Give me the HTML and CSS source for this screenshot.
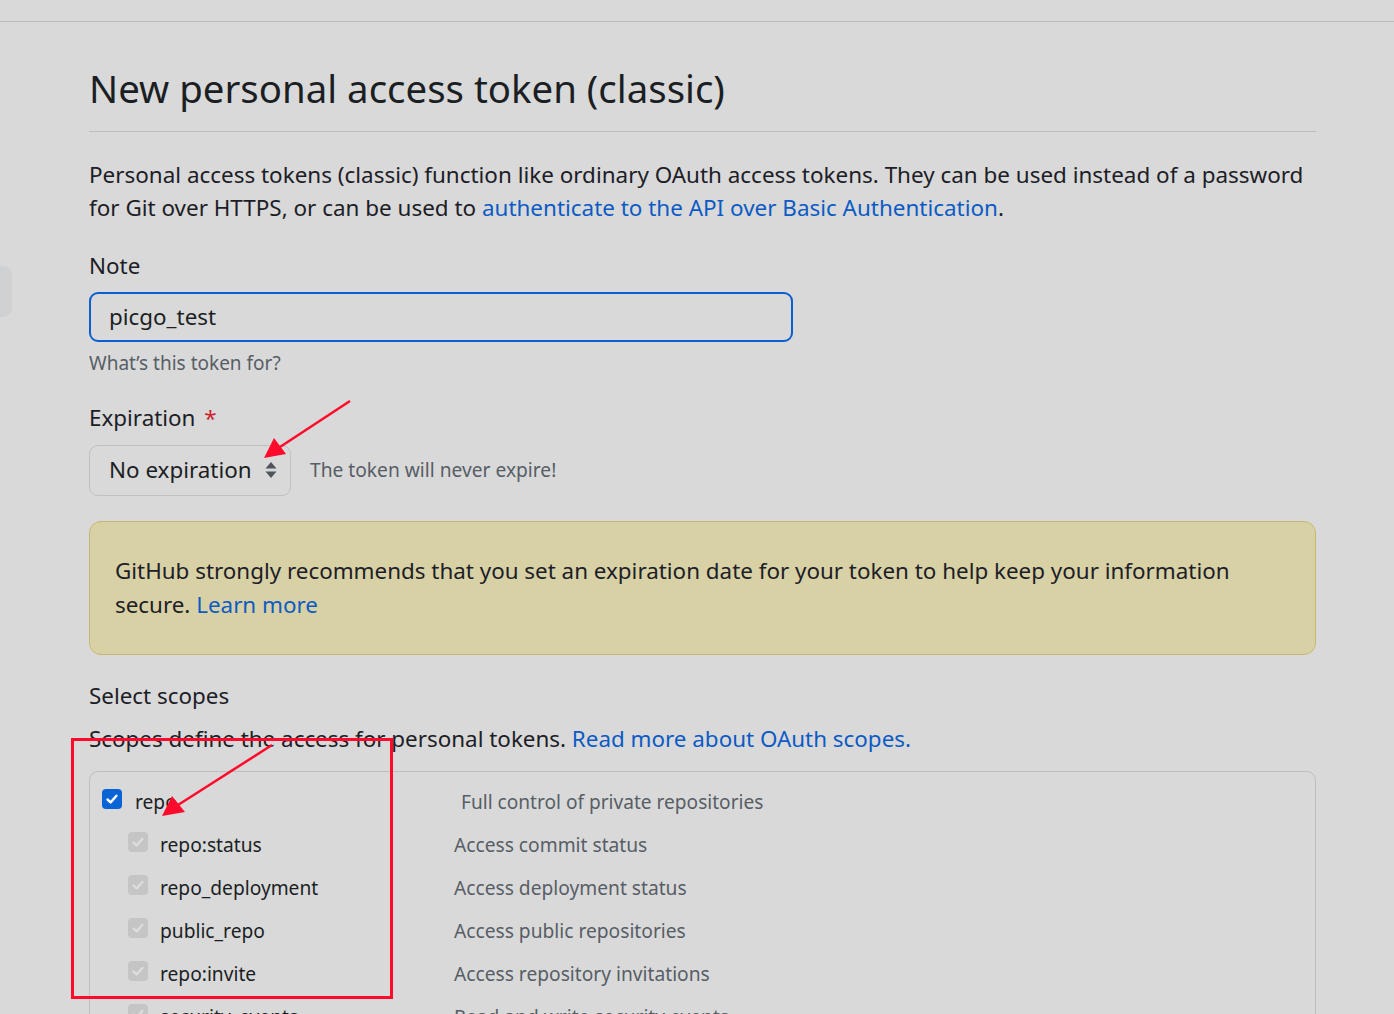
FILE: index.html
```html
<!DOCTYPE html>
<html lang="en">
<head>
<meta charset="utf-8">
<title>New personal access token (classic)</title>
<link rel="stylesheet" href="styles.css">
</head>
<body>
<div class="topbar"></div>
<div class="side-tab"></div>
<main class="page">
  <h2 class="title">New personal access token (classic)</h2>
  <p class="intro">Personal access tokens (classic) function like ordinary OAuth access tokens. They can be used instead of a password for Git over HTTPS, or can be used to <a href="#">authenticate to the API over Basic Authentication</a>.</p>

  <div class="field">
    <label class="label">Note</label>
    <input class="input" type="text" value="picgo_test">
    <div class="note">What’s this token for?</div>
  </div>

  <div class="field field-exp">
    <label class="label">Expiration <span class="req">*</span></label>
    <div class="exp-row">
      <div class="select">
        <span>No expiration</span>
        <svg class="sel-icon" width="12" height="18" viewBox="0 0 12 18"><path d="M6 1 L11.5 7.5 H0.5 Z" fill="#4f555c"/><path d="M6 17 L11.5 10.5 H0.5 Z" fill="#4f555c"/></svg>
      </div>
      <span class="exp-note">The token will never expire!</span>
    </div>
  </div>

  <div class="flash">GitHub strongly recommends that you set an expiration date for your token to help keep your information secure. <a href="#">Learn more</a></div>

  <div class="scopes-head">
    <div class="label">Select scopes</div>
    <p class="scopes-desc">Scopes define the access for personal tokens. <a href="#">Read more about OAuth scopes.</a></p>
  </div>

  <div class="scopes">
    <div class="row parent">
      <span class="name"><span class="cb on"><svg width="14" height="14" viewBox="0 0 14 14"><path d="M2.5 7.5 L5.6 10.4 L11.5 3.8" stroke="#fff" stroke-width="2.4" fill="none" stroke-linecap="round" stroke-linejoin="round"/></svg></span>repo</span>
      <span class="desc">Full control of private repositories</span>
    </div>
    <div class="row child">
      <span class="name"><span class="cb off"><svg width="14" height="14" viewBox="0 0 14 14"><path d="M2.5 7.5 L5.6 10.4 L11.5 3.8" stroke="#dedede" stroke-width="2.2" fill="none" stroke-linecap="round" stroke-linejoin="round"/></svg></span>repo:status</span>
      <span class="desc">Access commit status</span>
    </div>
    <div class="row child">
      <span class="name"><span class="cb off"><svg width="14" height="14" viewBox="0 0 14 14"><path d="M2.5 7.5 L5.6 10.4 L11.5 3.8" stroke="#dedede" stroke-width="2.2" fill="none" stroke-linecap="round" stroke-linejoin="round"/></svg></span>repo_deployment</span>
      <span class="desc">Access deployment status</span>
    </div>
    <div class="row child">
      <span class="name"><span class="cb off"><svg width="14" height="14" viewBox="0 0 14 14"><path d="M2.5 7.5 L5.6 10.4 L11.5 3.8" stroke="#dedede" stroke-width="2.2" fill="none" stroke-linecap="round" stroke-linejoin="round"/></svg></span>public_repo</span>
      <span class="desc">Access public repositories</span>
    </div>
    <div class="row child">
      <span class="name"><span class="cb off"><svg width="14" height="14" viewBox="0 0 14 14"><path d="M2.5 7.5 L5.6 10.4 L11.5 3.8" stroke="#dedede" stroke-width="2.2" fill="none" stroke-linecap="round" stroke-linejoin="round"/></svg></span>repo:invite</span>
      <span class="desc">Access repository invitations</span>
    </div>
    <div class="row child">
      <span class="name"><span class="cb off"><svg width="14" height="14" viewBox="0 0 14 14"><path d="M2.5 7.5 L5.6 10.4 L11.5 3.8" stroke="#dedede" stroke-width="2.2" fill="none" stroke-linecap="round" stroke-linejoin="round"/></svg></span>security_events</span>
      <span class="desc">Read and write security events</span>
    </div>
  </div>
</main>

<svg class="annot" width="1394" height="1014" viewBox="0 0 1394 1014">
  <g stroke="#ff0a2a" fill="#ff0a2a">
    <line x1="350" y1="401" x2="280" y2="447" stroke-width="2.5"/>
    <path d="M264 458 L274 438 L286 454 Z" stroke="none"/>
    <rect x="72.5" y="739.5" width="319" height="258" fill="none" stroke-width="3"/>
    <line x1="272" y1="745" x2="178" y2="805" stroke-width="2.5"/>
    <path d="M162 816 L172 796 L185 812 Z" stroke="none"/>
  </g>
</svg>
</body>
</html>
```

FILE: styles.css
```css
html, body {
  margin: 0;
  padding: 0;
  background: #d9d9d9;
}
body {
  font-family: "Noto Sans", "Open Sans", sans-serif;
  color: #1c2026;
  font-size: 22.4px;
  line-height: 1.5;
  position: relative;
  min-height: 1014px;
  overflow: hidden;
}
a {
  color: #0c5bc5;
  text-decoration: none;
}
.topbar {
  height: 21px;
  border-bottom: 1px solid #bcbcbe;
}
.side-tab {
  position: absolute;
  left: 0;
  top: 266px;
  width: 12px;
  height: 51px;
  background: #d0d1d3;
  border-radius: 0 9px 9px 0;
}
.page {
  width: 1227px;
  margin-left: 89px;
  padding-top: 38px;
}
.title {
  margin: 0;
  font-size: 38.4px;
  font-weight: 400;
  line-height: 56px;
  padding-bottom: 15px;
  border-bottom: 1px solid #bebebe;
  color: #1b1f24;
}
.intro {
  margin: 26px 0 0;
  line-height: 33px;
  font-size: 22.45px;
}
.field {
  margin-top: 25px;
}
.field-exp {
  margin-top: 24px;
}
.label {
  display: block;
  line-height: 33px;
  margin-bottom: 10px;
}
.field-exp .label {
  margin-bottom: 11px;
}
.req {
  color: #c9232e;
  margin-left: 3px;
}
.input {
  display: block;
  box-sizing: border-box;
  width: 704px;
  height: 50px;
  border: 2px solid #0b5fd0;
  border-radius: 9px;
  background: #d9d9d9;
  font-family: inherit;
  font-size: 22.4px;
  color: #1b1f24;
  padding: 0 18px 2px;
  outline: none;
  margin: 0;
}
.note {
  font-size: 19px;
  color: #575e66;
  line-height: 28px;
  margin-top: 7px;
}
.exp-row {
  display: flex;
  align-items: center;
  gap: 19px;
}
.select {
  box-sizing: border-box;
  width: 202px;
  height: 51px;
  border: 1px solid #bfc1c4;
  border-radius: 9px;
  display: flex;
  align-items: center;
  padding: 0 13px 2px 19px;
  justify-content: space-between;
  color: #1b1f24;
}
.sel-icon {
  display: block;
}
.exp-note {
  font-size: 19.2px;
  color: #575e66;
}
.flash {
  margin-top: 25px;
  box-sizing: border-box;
  min-height: 134px;
  background: #d8d1a6;
  border: 1px solid #c8b772;
  border-radius: 12px;
  padding: 32px 25px;
  font-size: 22.4px;
  line-height: 34px;
}
.scopes-head {
  margin-top: 24px;
}
.scopes-head .label {
  margin-bottom: 10px;
}
.scopes-desc {
  margin: 0;
  line-height: 33px;
}
.scopes {
  margin-top: 16px;
  border: 1px solid #bebebe;
  border-radius: 9px;
  padding: 15px 12px 0;
  height: 300px;
}
.row {
  display: flex;
  align-items: center;
  height: 43px;
  font-size: 19.2px;
}
.row.parent {
  height: 31px;
  margin-bottom: 6px;
}
.parent .desc {
  font-size: 19.1px;
}
.name {
  display: flex;
  align-items: center;
  color: #1b1f24;
}
.parent .name {
  width: 359px;
}
.child .name {
  width: 326px;
  padding-left: 26px;
}
.cb {
  width: 20px;
  height: 20px;
  border-radius: 4px;
  display: inline-flex;
  align-items: center;
  justify-content: center;
  margin-right: 13px;
  flex: none;
  position: relative;
  top: -3px;
}
.cb.on {
  background: #0b64d6;
}
.child .cb {
  margin-right: 12px;
}
.cb.off {
  background: #c5c5c6;
}
.desc {
  color: #575e66;
}
.annot {
  position: absolute;
  left: 0;
  top: 0;
  pointer-events: none;
}
```
